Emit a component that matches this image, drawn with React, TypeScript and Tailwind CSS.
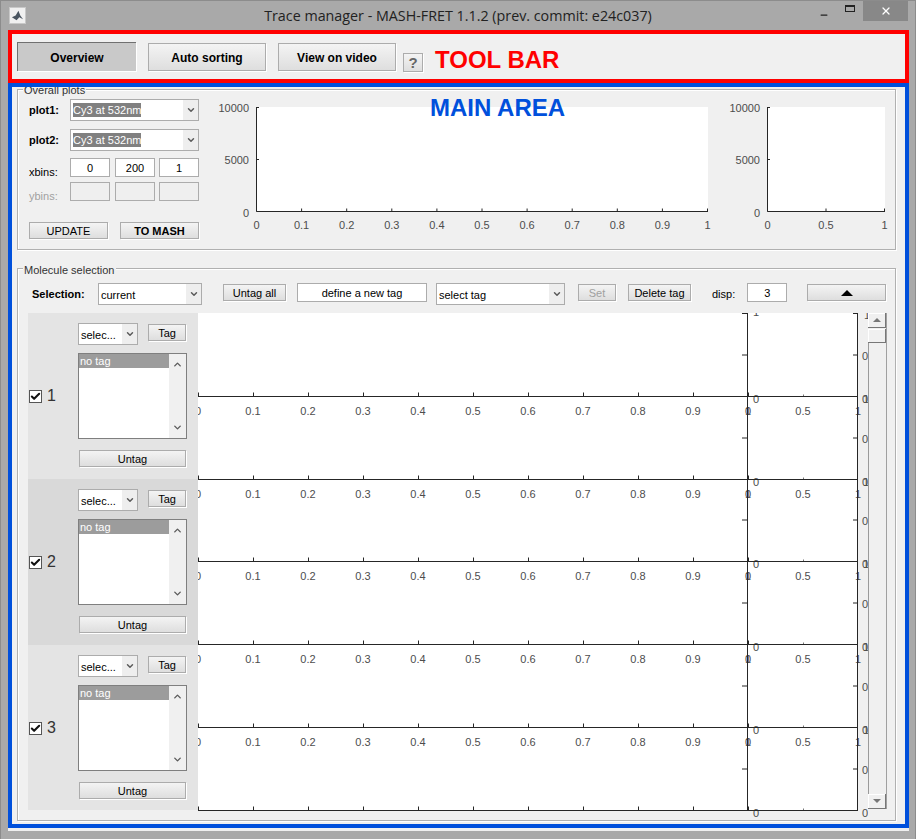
import { Check, ChevronDown, ChevronUp, Minus, X } from 'lucide-react';
import type { ReactNode } from 'react';

const tickColor = '#262626';
const labelColor = '#4d4d4d';

const Btn = ({ className, children }: { className: string; children: ReactNode }) => (
    <div
        className={`flex shrink-0 items-center justify-center border border-[#acacac] bg-gradient-to-b from-[#f4f4f4] to-[#dedede] pt-[1px] text-[11px] text-black shadow-[1px_1px_0_#fff] ${className}`}
    >
        {children}
    </div>
);

const Dropdown = ({ label, className, selected }: { label: string; className: string; selected?: boolean }) => (
    <div className={`flex shrink-0 border border-[#acacac] bg-white text-[11px] text-black ${className}`}>
        <div className="flex min-w-0 flex-1 items-center overflow-hidden pl-[2px]">
            <span className={selected ? 'bg-[#808080] leading-[14px] text-white' : 'pt-[3px]'}>{label}</span>
        </div>
        <div className="flex w-[15px] items-center justify-center bg-[#eeeeee]">
            <ChevronDown size={10} strokeWidth={3.5} color="#5a5a5a" />
        </div>
    </div>
);

const Field = ({ value, className }: { value?: string; className: string }) => (
    <div className={`flex shrink-0 items-center justify-center border border-[#acacac] pt-[1px] text-[11px] ${value ? 'bg-white text-black' : 'bg-[#efefef]'} ${className}`}>
        {value}
    </div>
);

const Panel = ({ title, className, legendClass, children }: { title: string; className: string; legendClass: string; children: ReactNode }) => (
    <div className={`relative w-[879px] border border-[#b0b0b0] shadow-[inset_1px_1px_0_#fff,1px_1px_0_#fff] ${className}`}>
        <span className={`absolute left-[5px] bg-[#f0f0f0] px-[1px] text-[11px] leading-[12px] text-[#333333] ${legendClass}`}>{title}</span>
        {children}
    </div>
);

const Triangle = ({ down, className }: { down?: boolean; className: string }) => (
    <svg viewBox="0 0 10 5" className={className}>
        <polygon points={down ? '0,0 10,0 5,5' : '0,5 10,5 5,0'} fill="currentColor" />
    </svg>
);

const Text = ({ x, y, anchor = 'middle', children }: { x: number; y: number; anchor?: 'start' | 'middle' | 'end'; children: ReactNode }) => (
    <text x={x} y={y} textAnchor={anchor} fontSize="11" fill={labelColor} fontFamily="'Liberation Sans', sans-serif">
        {children}
    </text>
);

type OverallChartProps = {
    width: number;
    left: number;
    plotWidth: number;
    xLabels: string[];
};

const OverallChart = ({ width, left, plotWidth, xLabels }: OverallChartProps) => {
    const top = 8;
    const bottom = 112.5;
    return (
        <svg width={width} height={135} className="shrink-0">
            <rect x={left} y={top} width={plotWidth} height={bottom - top} fill="#fff" />
            <path d={`M${left + 0.5} ${top}V${bottom}H${left + plotWidth}`} stroke={tickColor} fill="none" />
            <path d={`M${left} ${top + 0.5}h3M${left} ${top + 52.5}h3`} stroke={tickColor} />
            <Text x={left - 7} y={top + 5} anchor="end">10000</Text>
            <Text x={left - 7} y={top + 57} anchor="end">5000</Text>
            <Text x={left - 7} y={top + 110} anchor="end">0</Text>
            {xLabels.map((label, i) => {
                const x = left + 0.5 + (i * (plotWidth - 1)) / (xLabels.length - 1);
                return (
                    <g key={label}>
                        <path d={`M${x} ${bottom}v-3`} stroke={tickColor} />
                        <Text x={x} y={130}>{label}</Text>
                    </g>
                );
            })}
        </svg>
    );
};

const tenths = ['0', '0.1', '0.2', '0.3', '0.4', '0.5', '0.6', '0.7', '0.8', '0.9', '1'];
const axisRows = [83.5, 166.5, 248.5, 331.5, 414.5, 497.5];

const TraceChart = () => (
    <svg width={670} height={507} className="shrink-0">
        <rect x={0} y={0} width={660} height={498} fill="#fff" />
        {axisRows.map((y, row) => (
            <g key={y}>
                {row < 5 &&
                    tenths.map((label, i) => (
                        <Text key={label} x={i * 55} y={y + 18}>{label}</Text>
                    ))}
                {row < 5 && <Text x={550} y={y + 18}>0</Text>}
                {row < 5 && <Text x={605} y={y + 18}>0.5</Text>}
                {row < 5 && <Text x={660} y={y + 18}>1</Text>}
                <Text x={558} y={y + 6}>0</Text>
                <Text x={664} y={y + 6} anchor="start">0</Text>
                {row < 5 && <Text x={665} y={y + 6} anchor="start">1</Text>}
                <Text x={664} y={y - 37} anchor="start">0.5</Text>
                {tenths.map((label, i) => (
                    <path key={label} d={`M${i * 55 + 0.5} ${y}v-4`} stroke={tickColor} />
                ))}
                <path d={`M605.5 ${y}v-2`} stroke="#777" />
                <path d={`M544 ${y}h5M544 ${y - 41.5}h5M655 ${y - 41.5}h5`} stroke={tickColor} />
                <path d={`M0 ${y}H660`} stroke={tickColor} />
            </g>
        ))}
        <Text x={558} y={3}>1</Text>
        <Text x={666} y={6} anchor="start">1</Text>
        <path d="M544 0.5h5M655 0.5h5" stroke={tickColor} />
        <path d="M549.5 0V498M659.5 0V498" stroke={tickColor} />
    </svg>
);

const MoleculeRow = ({ id, className }: { id: number; className: string }) => (
    <div className={`flex h-[166px] w-[170px] ${className}`}>
        <div className="flex w-[50px] items-center pl-[1px]">
            <div className="flex h-[13px] w-[13px] items-center justify-center border border-[#555555] bg-white">
                <Check size={11} strokeWidth={4.5} color="#111" />
            </div>
            <span className="ml-[5px] text-[16px] font-light leading-none text-[#333333]">{id}</span>
        </div>
        <div className="flex flex-col pt-[10px]">
            <div className="flex">
                <Dropdown label="selec..." className="h-[22px] w-[60px]" />
                <Btn className="ml-[10px] mt-[1px] h-[17px] w-[38px]">Tag</Btn>
            </div>
            <div className="mt-[8px] flex h-[86px] w-[109px] border border-[#7f7f7f] bg-white">
                <div className="flex-1">
                    <div className="h-[14px] bg-[#9c9c9c] pl-[1px] text-[11px] leading-[15px] text-white">no tag</div>
                </div>
                <div className="flex w-[17px] flex-col items-center justify-between bg-[#f0f0f0] py-[5px]">
                    <ChevronUp size={11} strokeWidth={3} color="#5a5a5a" />
                    <ChevronDown size={11} strokeWidth={3} color="#5a5a5a" />
                </div>
            </div>
            <Btn className="ml-[1px] mt-[11px] h-[17px] w-[107px]">Untag</Btn>
        </div>
    </div>
);

const App = () => {
    return (
        <div className="flex h-[839px] w-[916px] flex-col overflow-hidden border-t border-l border-r border-[#8c8c8c] bg-[#a9a9a9] font-['Liberation_Sans',Arial,sans-serif]">
            <div className="relative flex h-[29px] shrink-0 items-center pl-[9px]">
                <div className="flex h-[15px] w-[15px] items-center justify-center bg-[#f0f0f0] shadow-[0_0_0_1px_#c8c8c8]">
                    <svg viewBox="0 0 14 14" className="h-[13px] w-[13px]">
                        <path d="M1 9 L5 7 L8 2 L10 7 L13 11 L9 9 L6 12 Z" fill="#4a5560" />
                    </svg>
                </div>
                <div className="flex-1 pr-[24px] text-center font-['Open_Sans',sans-serif] text-[14.3px] text-[#222222]">
                    Trace manager - MASH-FRET 1.1.2 (prev. commit: e24c037)
                </div>
                <div className="absolute right-[7px] top-0 flex h-[20px] items-start">
                    <div className="flex h-[20px] w-[26px] items-center justify-center pt-[7px]">
                        <Minus size={10} strokeWidth={3} color="#222" />
                    </div>
                    <div className="flex h-[20px] w-[26px] items-center justify-center pb-[5px]">
                        <div className="h-[7px] w-[10px] border border-t-2 border-[#222222]" />
                    </div>
                    <div className="flex h-[20px] w-[45px] items-center justify-center bg-[#888888]">
                        <X size={12} strokeWidth={2.5} color="#fff" />
                    </div>
                </div>
            </div>

            <div className="ml-[7px] h-[801px] w-[901px] shrink-0 bg-[#f0f0f0]">
                <div className="flex h-[53px] border-4 border-[#ff0000] pl-[5px] pt-[8px]">
                    <div className="flex h-[29px] w-[119px] items-center justify-center border-t border-l border-t-[#707070] border-l-[#707070] bg-[#c9c9c9] pt-[1px] text-[12px] font-bold text-black shadow-[1px_1px_0_#fff]">
                        Overview
                    </div>
                    <Btn className="ml-[12px] mt-[1px] h-[28px] w-[118px] !text-[12px] font-bold">Auto sorting</Btn>
                    <Btn className="ml-[12px] mt-[1px] h-[28px] w-[118px] !text-[12px] font-bold">View on video</Btn>
                    <Btn className="ml-[7px] mt-[11px] h-[19px] w-[20px] !text-[15px] font-bold !text-[#666666]">?</Btn>
                    <span className="ml-[12px] mt-[3px] text-[24px] font-bold leading-[29px] text-[#ff0000]">TOOL BAR</span>
                </div>

                <div className="h-[745px] overflow-hidden border-4 border-[#0050dc] pl-[5px] pt-[2px]">
                    <Panel title="Overall plots" className="h-[161px]" legendClass="-top-[6px]">
                        <span className="absolute left-[412px] top-[4px] z-10 text-[24px] font-bold leading-[28px] text-[#0050dc]">MAIN AREA</span>
                        <div className="flex pl-[11px] pt-[9px]">
                            <div className="flex w-[170px] shrink-0 flex-col text-[11px] text-black">
                                <div className="flex items-center">
                                    <span className="w-[41px] pt-[1px] font-bold">plot1:</span>
                                    <Dropdown label="Cy3 at 532nm" selected className="h-[22px] w-[129px]" />
                                </div>
                                <div className="mt-[8px] flex items-center">
                                    <span className="w-[41px] pt-[1px] font-bold">plot2:</span>
                                    <Dropdown label="Cy3 at 532nm" selected className="h-[22px] w-[129px]" />
                                </div>
                                <div className="mt-[7px] flex h-[19px] items-center">
                                    <span className="w-[41px] pt-[8px] leading-[14px]">xbins:</span>
                                    <Field value="0" className="h-[19px] w-[40px]" />
                                    <Field value="200" className="ml-[5px] h-[19px] w-[40px]" />
                                    <Field value="1" className="ml-[4px] h-[19px] w-[40px]" />
                                </div>
                                <div className="mt-[5px] flex h-[19px] items-center">
                                    <span className="w-[41px] pt-[8px] leading-[14px] text-[#a0a0a0]">ybins:</span>
                                    <Field className="h-[19px] w-[40px]" />
                                    <Field className="ml-[5px] h-[19px] w-[40px]" />
                                    <Field className="ml-[4px] h-[19px] w-[40px]" />
                                </div>
                                <div className="mt-[21px] flex">
                                    <Btn className="h-[17px] w-[79px]">UPDATE</Btn>
                                    <Btn className="ml-[12px] h-[17px] w-[79px] font-bold">TO MASH</Btn>
                                </div>
                            </div>
                            <div className="ml-[6px] flex">
                                <OverallChart width={520} left={51} plotWidth={452} xLabels={tenths} />
                                <OverallChart width={170} left={42} plotWidth={118} xLabels={['0', '0.5', '1']} />
                            </div>
                        </div>
                    </Panel>

                    <Panel title="Molecule selection" className="mt-[18px] h-[553px]" legendClass="-top-[5px]">
                        <div className="flex pl-[14px] pt-[14px] text-[11px] text-black">
                            <span className="w-[66px] pt-[3px] font-bold">Selection:</span>
                            <Dropdown label="current" className="h-[22px] w-[104px]" />
                            <Btn className="ml-[21px] mt-[1px] h-[17px] w-[63px]">Untag all</Btn>
                            <Field value="define a new tag" className="ml-[11px] h-[19px] w-[130px]" />
                            <Dropdown label="select tag" className="ml-[9px] h-[22px] w-[129px]" />
                            <Btn className="ml-[13px] mt-[1px] h-[17px] w-[38px] !text-[#a0a0a0]">Set</Btn>
                            <Btn className="ml-[12px] mt-[1px] h-[17px] w-[63px]">Delete tag</Btn>
                            <span className="ml-[21px] pt-[3px]">disp:</span>
                            <Field value="3" className="ml-[12px] h-[19px] w-[40px]" />
                            <Btn className="ml-[20px] mt-[1px] h-[17px] w-[79px]">
                                <Triangle className="h-[6px] w-[12px] text-black" />
                            </Btn>
                        </div>
                        <div className="ml-[10px] mt-[8px] flex">
                            <div className="h-[497px] shrink-0 overflow-hidden">
                                <MoleculeRow id={1} className="bg-[#e4e4e4]" />
                                <MoleculeRow id={2} className="bg-[#d9d9d9]" />
                                <MoleculeRow id={3} className="bg-[#e4e4e4]" />
                            </div>
                            <TraceChart />
                            <div className="flex h-[496px] w-[19px] shrink-0 flex-col border-r border-[#a0a0a0] bg-[#f0f0f0]">
                                <div className="flex h-[15px] items-center justify-center border-r border-b border-[#777777] bg-[#f0f0f0] text-[#777777] shadow-[inset_1px_1px_0_#fff]">
                                    <Triangle className="h-[4px] w-[8px]" />
                                </div>
                                <div className="mt-[1px] h-[14px] border-r border-b border-[#777777] bg-[#f0f0f0] shadow-[inset_1px_1px_0_#fff]" />
                                <div className="flex-1 border-l border-[#9a9a9a]" />
                                <div className="flex h-[15px] items-center justify-center border-r border-b border-[#777777] bg-[#f0f0f0] text-[#777777] shadow-[inset_1px_1px_0_#fff]">
                                    <Triangle down className="h-[4px] w-[8px]" />
                                </div>
                            </div>
                        </div>
                    </Panel>
                </div>
            </div>
        </div>
    );
};

export default App;
